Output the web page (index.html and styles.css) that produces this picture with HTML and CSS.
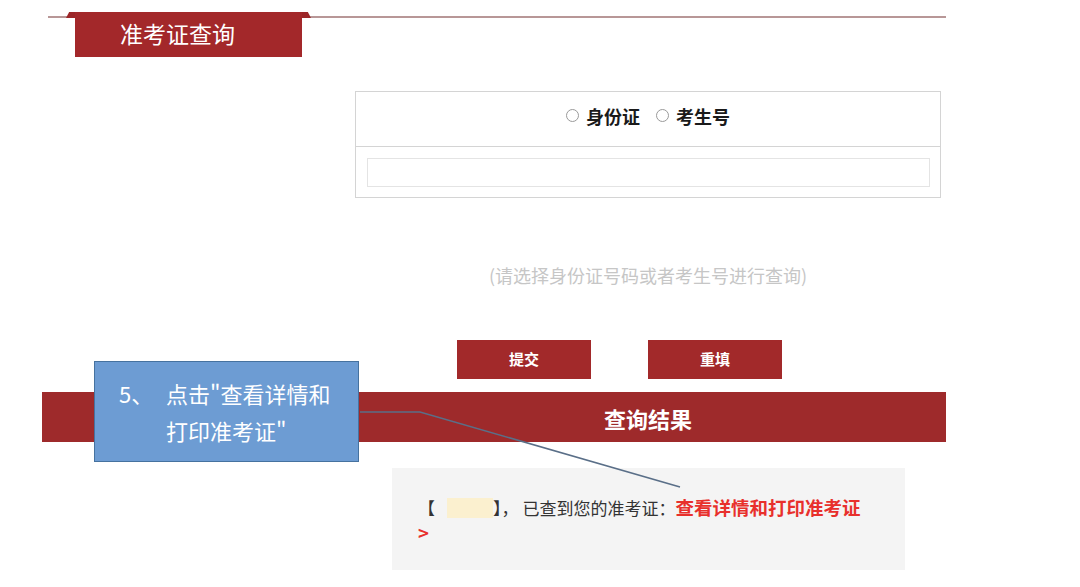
FILE: index.html
```html
<!DOCTYPE html>
<html lang="zh-CN">
<head>
    <meta charset="UTF-8">
    <meta name="viewport" content="width=device-width, initial-scale=1.0">
    <title>准考证查询</title>
    <link rel="stylesheet" href="styles.css">
</head>
<body>
    <div class="page">
        <div class="header">
            <div class="tab">准考证查询</div>
        </div>

        <form class="query" id="queryForm">
            <div class="query-box">
                <div class="type-row">
                    <label class="type"><input type="radio" name="type" value="id">身份证</label>
                    <label class="type"><input type="radio" name="type" value="no">考生号</label>
                </div>
                <div class="input-row">
                    <input type="text" class="field" id="keyword">
                </div>
            </div>
            <p class="hint">(请选择身份证号码或者考生号进行查询)</p>
            <div class="actions">
                <button type="submit" class="btn">提交</button>
                <button type="reset" class="btn">重填</button>
            </div>
        </form>

        <div class="result-bar">
            <h2 class="result-title">查询结果</h2>
        </div>
        <div class="result">
            【<span class="masked"></span>】<span class="comma">，</span>已查到您的准考证：<a class="link" href="#">查看详情和打印准考证<br>&gt;</a>
        </div>

        <svg class="connector" width="1080" height="587" viewBox="0 0 1080 587">
            <polyline points="360,412 420,412 680,487" fill="none" stroke="#5a6f88" stroke-width="1.6"/>
        </svg>
        <div class="callout">
            <span class="step">5、</span>
            <span class="step-text">点击"查看详情和<br>打印准考证"</span>
        </div>
    </div>
</body>
</html>
```

FILE: styles.css
```css
body {
    margin: 0;
    background-color: #ffffff;
    font-family: "Noto Sans CJK SC", "Liberation Sans", sans-serif;
}

.page {
    position: relative;
    width: 1080px;
    height: 587px;
    overflow: hidden;
}

/* header ribbon */
.header {
    margin: 12px 0 0 48px;
    width: 898px;
    height: 45px;
    background: linear-gradient(#b89797, #b89797) 0 4px / 100% 2px no-repeat;
}

.tab {
    position: relative;
    margin-left: 27px;
    width: 227px;
    height: 45px;
    box-sizing: border-box;
    padding-left: 45px;
    background-color: #a3282a;
    color: #ffffff;
    font-size: 23px;
    line-height: 42px;
}

.tab::before,
.tab::after {
    content: "";
    position: absolute;
    top: 0;
    width: 9px;
    height: 6px;
    background-color: #9c2628;
}

.tab::before {
    left: -9px;
    clip-path: polygon(35% 0, 100% 0, 100% 100%, 0 100%);
}

.tab::after {
    right: -9px;
    clip-path: polygon(0 0, 65% 0, 100% 100%, 0 100%);
}

/* query form */
.query {
    margin: 34px 0 0 355px;
    width: 586px;
}

.query-box {
    border: 1px solid #d4d4d4;
}

.type-row {
    display: flex;
    justify-content: center;
    align-items: center;
    gap: 16px;
    height: 55px;
    box-sizing: border-box;
    padding-bottom: 7px;
    border-bottom: 1px solid #d4d4d4;
}

.type {
    display: flex;
    align-items: center;
    gap: 7px;
    font-size: 18px;
    font-weight: bold;
    color: #1a1a1a;
}

.type input {
    appearance: none;
    margin: 0;
    width: 13px;
    height: 13px;
    border: 1px solid #9a9a9a;
    border-radius: 50%;
    background-color: #ffffff;
}

.input-row {
    padding: 11px 10px 10px 11px;
}

.field {
    display: block;
    box-sizing: border-box;
    width: 100%;
    height: 29px;
    margin: 0;
    border: 1px solid #e4e4e4;
    outline: none;
}

.hint {
    margin: 64px 0 0 0;
    text-align: center;
    font-size: 18px;
    line-height: 26px;
    color: #c6c6c6;
}

.actions {
    display: flex;
    gap: 57px;
    margin-top: 52px;
    padding-left: 102px;
}

.btn {
    width: 134px;
    height: 39px;
    padding: 0 0 3px 0;
    border: none;
    background-color: #a2292a;
    color: #ffffff;
    font-family: inherit;
    font-size: 15px;
    font-weight: bold;
}

/* result */
.result-bar {
    margin: 13px 0 0 42px;
    width: 904px;
    height: 50px;
    box-sizing: border-box;
    padding: 0 5px 0 313px;
    background-color: #9e2a2b;
}

.result-title {
    margin: 0;
    text-align: center;
    color: #ffffff;
    font-size: 22px;
    line-height: 52px;
}

.result {
    margin: 26px 0 0 392px;
    width: 513px;
    height: 102px;
    box-sizing: border-box;
    padding: 27px 10px 0 26px;
    background-color: #f4f4f4;
    color: #333333;
    font-size: 17px;
    line-height: 25px;
}

.masked {
    display: inline-block;
    width: 46px;
    height: 20px;
    margin-left: 12px;
    vertical-align: -3px;
    background-color: #fbf0cf;
}

.comma {
    margin-right: 4px;
}

.link {
    color: #e8302c;
    font-size: 18.5px;
    font-weight: bold;
    text-decoration: none;
}

/* annotation overlay */
.connector {
    position: absolute;
    left: 0;
    top: 0;
    pointer-events: none;
}

.callout {
    position: absolute;
    left: 94px;
    top: 361px;
    width: 265px;
    height: 101px;
    box-sizing: border-box;
    display: flex;
    padding: 13px 0 0 24px;
    background-color: #6d9cd3;
    border: 1.5px solid #46729f;
    color: #ffffff;
    font-size: 22px;
    line-height: 37px;
}

.step {
    width: 47px;
}
```
